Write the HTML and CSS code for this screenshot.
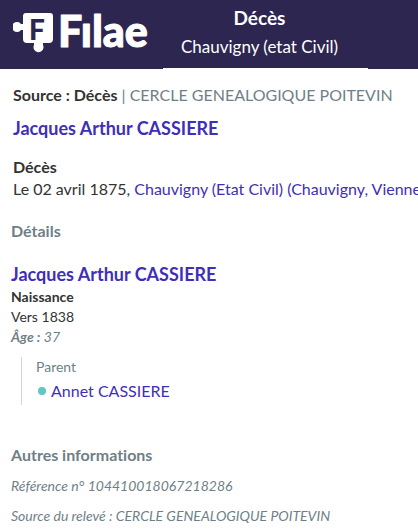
FILE: index.html
```
<!DOCTYPE html>
<html lang="fr">
<head>
  <meta charset="UTF-8">
  <meta name="viewport" content="width=device-width, initial-scale=1">
  <title>Filae - Décès</title>
  <link rel="stylesheet" href="styles.css">
</head>
<body>
  <header class="topbar">
    <!-- Logo: puzzle piece + name -->
    <svg class="logo" width="140" height="44" viewBox="0 0 140 44" role="img" aria-label="Filae">
      <path class="logo-piece" d="M13 1H37Q40 1 40 4V27Q40 31 36 31H30V33A5 5 0 1 1 21 33V31H14Q10 31 10 27V18H8A5 5 0 1 1 8 12H10V4Q10 1 13 1Z"/>
      <text class="logo-letter" x="16" y="28">F</text>
      <text class="logo-name" x="45" y="35">Fılae</text>
    </svg>
    <div class="topbar-title">
      <h1>Décès</h1>
      <p>Chauvigny (etat Civil)</p>
    </div>
  </header>

  <main class="record">
    <!-- Summary -->
    <section class="summary">
      <p class="source"><strong>Source : Décès</strong> | CERCLE GENEALOGIQUE POITEVIN</p>
      <h2 class="person">Jacques Arthur CASSIERE</h2>
      <h3 class="event">Décès</h3>
      <p class="event-text">Le 02 avril 1875, <a href="#">Chauvigny (Etat Civil) (Chauvigny, Vienne</a></p>
    </section>

    <!-- Details -->
    <section class="details">
      <h3 class="section-title">Détails</h3>
      <h2 class="person">Jacques Arthur CASSIERE</h2>
      <p class="birth"><strong>Naissance</strong></p>
      <p class="birth">Vers 1838</p>
      <p class="age"><strong>Âge :</strong> 37</p>
      <div class="relatives">
        <h4>Parent</h4>
        <ul>
          <li><a href="#">Annet CASSIERE</a></li>
        </ul>
      </div>
    </section>

    <!-- Other information -->
    <section class="other">
      <h3 class="section-title">Autres informations</h3>
      <p>Référence n° 104410018067218286</p>
      <p>Source du relevé : CERCLE GENEALOGIQUE POITEVIN</p>
    </section>
  </main>
</body>
</html>
```
FILE: styles.css
```
* {
  box-sizing: border-box;
}
body {
  margin: 0;
  font-family: Lato, sans-serif;
  font-size: 16px;
  line-height: 20px;
  font-variant-ligatures: none;
  color: #333;
  background: #fff;
}
h1, h2, h3, h4, p, ul {
  margin: 0;
  padding: 0;
}
a {
  color: #3f2fb8;
  text-decoration: none;
}

/* Top bar */
.topbar {
  display: flex;
  align-items: stretch;
  gap: 10px;
  height: 69px;
  padding-left: 13px;
  background: #2d2650;
  color: #fff;
}
.logo {
  flex: none;
  margin-top: 12px;
}
.logo-piece {
  fill: #fff;
}
.logo-letter {
  font: 900 28px Lato, sans-serif;
  fill: #2d2650;
}
.logo-name {
  font: 900 43px Lato, sans-serif;
  fill: #fff;
  stroke: #fff;
  stroke-width: 1px;
  stroke-linejoin: round;
}
.topbar-title {
  flex: 1;
  margin-right: 50px;
  padding-top: 4px;
  border-bottom: 1px solid #fff;
  text-align: center;
  white-space: nowrap;
}
.topbar-title h1 {
  padding-right: 12px;
  font-size: 19px;
  line-height: 28px;
}
.topbar-title p {
  padding-right: 12px;
  font-size: 17px;
  line-height: 30px;
}

/* Summary */
.summary {
  padding: 16px 0 0 13px;
}
.source {
  color: #6f7f87;
}
.source strong {
  color: #333;
}
.person {
  font-size: 18px;
  line-height: 26px;
  color: #3f2fb8;
}
.summary .person {
  margin-top: 10px;
}
.event {
  margin-top: 15px;
  font-size: 16px;
  line-height: 22px;
}
.event-text {
  overflow: hidden;
  line-height: 22px;
  white-space: nowrap;
}

/* Details */
.details {
  padding: 20px 11px 0;
}
.section-title {
  font-size: 16px;
  line-height: 22px;
  color: #6f7f87;
}
.details .person {
  margin-top: 19px;
}
.birth, .age {
  font-size: 14px;
}
.age {
  font-style: italic;
  color: #6f7f87;
}
.relatives {
  margin: 10px 0 0 10px;
  padding-left: 14px;
  border-left: 1px solid #d5d5d5;
}
.relatives h4 {
  font-size: 14px;
  font-weight: normal;
  line-height: 20px;
  color: #6f7f87;
}
.relatives ul {
  list-style: none;
}
.relatives li {
  display: flex;
  align-items: center;
  gap: 5px;
  padding-left: 2px;
  line-height: 28px;
}
.relatives li::before {
  content: "";
  width: 8px;
  height: 8px;
  border-radius: 50%;
  background: #5cc9c4;
}

/* Other information */
.other {
  padding: 39px 11px 0;
}
.other p {
  margin-top: 10px;
  font-size: 14px;
  font-style: italic;
  color: #6f7f87;
}
```
